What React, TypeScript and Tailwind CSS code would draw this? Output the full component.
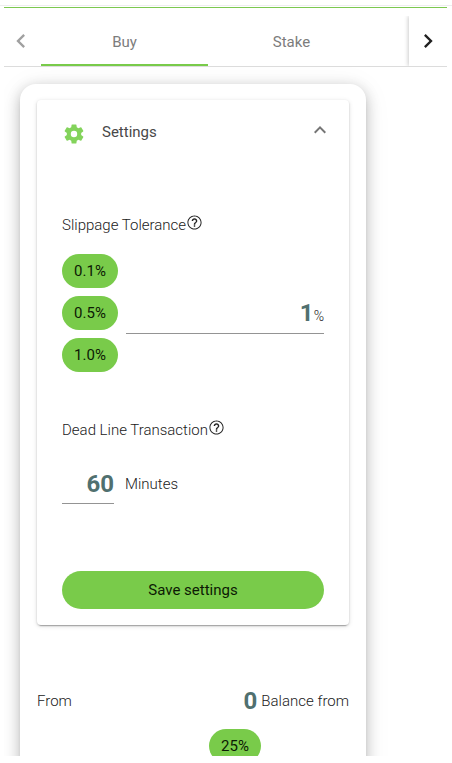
import { useState } from "react";

const CHEVRON_LEFT = "M15.41 7.41 14 6l-6 6 6 6 1.41-1.41L10.83 12z";
const CHEVRON_RIGHT = "M8.59 16.59 10 18l6-6-6-6-1.41 1.41L13.17 12z";
const CHEVRON_UP = "M7.41 15.41 12 10.83l4.59 4.58L18 14l-6-6-6 6z";
const GEAR =
  "M19.14 12.94c.04-.3.06-.61.06-.94s-.02-.64-.07-.94l2.03-1.58a.49.49 0 0 0 .12-.61l-1.92-3.32a.49.49 0 0 0-.59-.22l-2.39.96a7.03 7.03 0 0 0-1.62-.94l-.36-2.54A.48.48 0 0 0 13.92 2.4h-3.84a.48.48 0 0 0-.48.41l-.36 2.54c-.59.24-1.13.57-1.62.94l-2.39-.96a.48.48 0 0 0-.59.22L2.73 8.87a.48.48 0 0 0 .12.61l2.03 1.58c-.05.3-.08.63-.08.94s.02.64.07.94l-2.03 1.58a.49.49 0 0 0-.12.61l1.92 3.32c.12.22.37.29.59.22l2.39-.96c.5.38 1.03.7 1.62.94l.36 2.54c.05.24.24.41.48.41h3.84c.24 0 .44-.17.47-.41l.36-2.54a6.8 6.8 0 0 0 1.62-.94l2.39.96c.22.08.47 0 .59-.22l1.92-3.32a.48.48 0 0 0-.12-.61zM12 15.2a3.2 3.2 0 1 1 0-6.4 3.2 3.2 0 0 1 0 6.4z";
const HELP =
  "M11 18h2v-2h-2v2zm1-16C6.48 2 2 6.48 2 12s4.48 10 10 10 10-4.48 10-10S17.52 2 12 2zm0 18.6c-4.75 0-8.6-3.85-8.6-8.6S7.25 3.4 12 3.4s8.6 3.85 8.6 8.6-3.85 8.6-8.6 8.6zm0-14.6c-2.21 0-4 1.79-4 4h2c0-1.1.9-2 2-2s2 .9 2 2c0 2-3 1.75-3 5h2c0-2.25 3-2.5 3-5 0-2.21-1.79-4-4-4z";

function Icon({ path, className }: { path: string; className: string }) {
  return (
    <svg viewBox="0 0 24 24" fill="currentColor" aria-hidden="true" className={className}>
      <path d={path} />
    </svg>
  );
}

function Pill({ label, className, onClick }: { label: string; className: string; onClick?: () => void }) {
  return (
    <button
      type="button"
      onClick={onClick}
      className={`rounded-full bg-[#79cb4a] text-[15px] text-[#0c1a04] ${className}`}
    >
      {label}
    </button>
  );
}

function FieldLabel({ id, text }: { id: string; text: string }) {
  return (
    <div className="flex h-6 items-center text-[15px] font-light">
      <label htmlFor={id}>{text}</label>
      <button type="button" aria-label={`About ${text}`} className="mb-1.5 text-[#222]">
        <Icon path={HELP} className="size-[17px]" />
      </button>
    </div>
  );
}

export default function App() {
  const [slippage, setSlippage] = useState("1");
  const [deadline, setDeadline] = useState("60");
  const [open, setOpen] = useState(true);

  return (
    <div className="h-screen overflow-hidden bg-white pb-[7px] font-[Roboto,sans-serif] text-[#212121]">
      <div className="h-full overflow-hidden">
        <div className="h-[6px] border-b border-[#eee]" />
        <div className="mr-[5px] ml-1">
          <div className="mt-px h-px bg-[#7cc850]" />
          <header className="flex h-[59px] border-b border-[#dcdcdc] pt-2">
            <button type="button" aria-label="Previous tabs" className="grid w-[37px] shrink-0 place-items-center pr-1 text-[#a0a0a0]">
              <Icon path={CHEVRON_LEFT} className="size-7" />
            </button>
            <nav role="tablist" className="flex flex-1 overflow-hidden text-[15px] text-[#7c7c7c]">
              <button type="button" role="tab" aria-selected="true" className="w-[167px] shrink-0 border-b-2 border-[#79cb4a] pt-1">
                Buy
              </button>
              <button type="button" role="tab" aria-selected="false" className="w-[167px] shrink-0 border-b-2 border-transparent pt-1">
                Stake
              </button>
            </nav>
            <button
              type="button"
              aria-label="Next tabs"
              className="grid w-[38px] shrink-0 place-items-center text-[#212121] shadow-[-1px_0_4px_rgba(0,0,0,0.2)] [clip-path:inset(0_0_0_-8px)]"
            >
              <Icon path={CHEVRON_RIGHT} className="size-7" />
            </button>
          </header>

          <main className="overflow-hidden pt-[17px] pr-[81px] pl-4">
            <div className="h-[760px] rounded-2xl bg-white px-[17px] pt-4 shadow-[0_5px_5px_-3px_rgba(0,0,0,0.2),0_4px_14px_rgba(0,0,0,0.24),0_3px_28px_rgba(0,0,0,0.07)]">
              <section className="rounded bg-white px-[25px] pb-4 shadow-[0_3px_1px_-2px_rgba(0,0,0,0.2),0_1px_2px_rgba(0,0,0,0.18),0_1px_5px_rgba(0,0,0,0.12)]">
                <button
                  type="button"
                  aria-expanded={open}
                  onClick={() => setOpen(!open)}
                  className="flex h-16 w-full items-center text-left text-[15px] text-[#484848]"
                >
                  <Icon path={GEAR} className="mt-1 size-6 text-[#83d35b]" />
                  <span className="ml-4 flex-1">Settings</span>
                  <Icon path={CHEVRON_UP} className="-mr-2 mb-1 size-6 text-[#757575]" />
                </button>

                {open && (
                  <form onSubmit={(e) => e.preventDefault()} className="pt-[49px]">
                    <FieldLabel id="slippage" text="Slippage Tolerance" />
                    <div className="mt-[17px] flex items-center gap-2">
                      <div className="flex flex-col gap-2">
                        <Pill label="0.1%" className="h-[34px] w-14" onClick={() => setSlippage("0.1")} />
                        <Pill label="0.5%" className="h-[34px] w-14" onClick={() => setSlippage("0.5")} />
                        <Pill label="1.0%" className="h-[34px] w-14" onClick={() => setSlippage("1")} />
                      </div>
                      <div className="flex h-[42px] min-w-0 flex-1 items-baseline border-b border-[#949494]">
                        <input
                          id="slippage"
                          value={slippage}
                          onChange={(e) => setSlippage(e.target.value)}
                          className="h-[42px] w-full min-w-0 text-right text-2xl font-bold text-[#50706f] outline-none"
                        />
                        <span className="text-sm font-light">%</span>
                      </div>
                    </div>

                    <div className="mt-[46px]">
                      <FieldLabel id="deadline" text="Dead Line Transaction" />
                    </div>
                    <div className="mt-[22px] flex items-center gap-[11px]">
                      <input
                        id="deadline"
                        value={deadline}
                        onChange={(e) => setDeadline(e.target.value)}
                        className="h-10 w-[52px] border-b border-[#949494] text-right text-2xl font-bold text-[#50706f] outline-none"
                      />
                      <span className="text-[15px] font-light">Minutes</span>
                    </div>

                    <Pill label="Save settings" className="mt-[67px] h-[38px] w-full" />
                  </form>
                )}
              </section>

              <div className="mt-[60px] flex h-8 items-center justify-between text-[15px] font-light">
                <span>From</span>
                <span className="flex items-center gap-1">
                  <strong className="text-2xl font-bold text-[#50706f]">0</strong>
                  Balance from
                </span>
              </div>
              <div className="mt-3 pl-[172px]">
                <Pill label="25%" className="h-[34px] w-[52px]" />
              </div>
            </div>
          </main>
        </div>
      </div>
    </div>
  );
}
